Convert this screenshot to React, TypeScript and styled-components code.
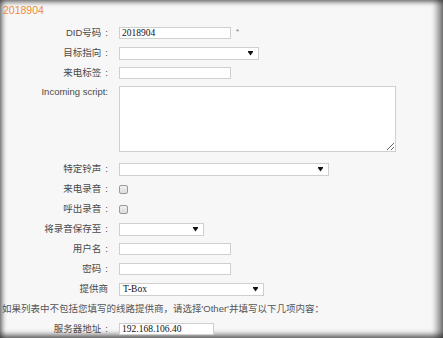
import React from 'react'
import styled, { createGlobalStyle } from 'styled-components'

const GlobalStyle = createGlobalStyle`
    html, body {
        margin: 0;
        padding: 0;
        background: #f7f7f7;
    }
    body {
        font-family: 'Liberation Sans', 'Noto Sans CJK SC', sans-serif;
    }
`

const Arrow = () => (
    <svg width="5" height="5" viewBox="0 0 5 5">
        <rect x="0" y="0" width="5" height="1" fill="#111" />
        <polygon points="0,1 5,1 2.5,4.5" fill="#111" />
    </svg>
)

type Row =
    | { kind: 'input'; label: string; width: number; value?: string; required?: boolean }
    | { kind: 'select'; label: string; width: number; value?: string }
    | { kind: 'check'; label: string }

const topRows: Row[] = [
    { kind: 'input', label: 'DID号码', width: 112, value: '2018904', required: true },
    { kind: 'select', label: '目标指向', width: 140 },
    { kind: 'input', label: '来电标签', width: 112 },
]

const bottomRows: Row[] = [
    { kind: 'select', label: '特定铃声', width: 210 },
    { kind: 'check', label: '来电录音' },
    { kind: 'check', label: '呼出录音' },
    { kind: 'select', label: '将录音保存至', width: 85 },
    { kind: 'input', label: '用户名', width: 112 },
    { kind: 'input', label: '密码', width: 112 },
]

const renderControl = (row: Row) => {
    if (row.kind === 'check') return <CheckBox />
    if (row.kind === 'select')
        return (
            <SelectBox $width={row.width}>
                <span>{row.value}</span>
                <Arrow />
            </SelectBox>
        )
    return (
        <>
            <TextInput $width={row.width} defaultValue={row.value} readOnly />
            {row.required && <Star>*</Star>}
        </>
    )
}

const renderRows = (rows: Row[]) =>
    rows.map((row) => (
        <FormRow key={row.label}>
            <Label>
                {row.label}
                <Colon>:</Colon>
            </Label>
            <Control>{renderControl(row)}</Control>
        </FormRow>
    ))

const App = () => {
    return (
        <Frame>
            <GlobalStyle />
            <Title>2018904</Title>
            {renderRows(topRows)}
            <ScriptRow>
                <Label>Incoming script:</Label>
                <Control>
                    <ScriptArea />
                </Control>
            </ScriptRow>
            {renderRows(bottomRows)}
            <FormRow>
                <Label>提供商</Label>
                <Control>
                    <SelectBox $width={145}>
                        <Value>T-Box</Value>
                        <Arrow />
                    </SelectBox>
                </Control>
            </FormRow>
            <Note>如果列表中不包括您填写的线路提供商，请选择'Other'并填写以下几项内容：</Note>
            <FormRow>
                <Label>
                    服务器地址
                    <Colon>:</Colon>
                </Label>
                <Control>
                    <TextInput $width={95} defaultValue="192.168.106.40" readOnly />
                </Control>
            </FormRow>
        </Frame>
    )
}

export default App

const Frame = styled.div`
    position: relative;
    width: 443px;
    height: 338px;
    overflow: hidden;
    background: #f7f7f7;
    box-shadow:
        inset 4px 0 4px -1px rgba(0, 0, 0, 0.4),
        inset 0 4px 4px -1px rgba(0, 0, 0, 0.35),
        inset -8px 0 6px -2px rgba(0, 0, 0, 0.45),
        inset 0 -6px 5px -2px rgba(0, 0, 0, 0.45);
    font-size: 9.5px;
    color: #4a4a4a;
`

const Title = styled.div`
    height: 23px;
    line-height: 20px;
    padding-left: 3px;
    font-size: 10.5px;
    color: #f08a3c;
`

const FormRow = styled.div`
    display: grid;
    grid-template-columns: 108px 1fr;
    column-gap: 11px;
    align-items: center;
    height: 20px;
`

const ScriptRow = styled(FormRow)`
    align-items: start;
    height: auto;
    padding: 3px 0 7px;
`

const Label = styled.div`
    text-align: right;
    line-height: 12px;
    white-space: nowrap;
`

const Colon = styled.span`
    margin-left: 4px;
`

const Control = styled.div`
    display: flex;
    align-items: center;
    height: 100%;
`

const TextInput = styled.input<{ $width: number }>`
    box-sizing: border-box;
    width: ${(p) => p.$width}px;
    height: 12px;
    margin: 0;
    padding: 0 2px;
    border: 1px solid #cfcfcf;
    background: #fff;
    font-family: 'Liberation Serif', serif;
    font-size: 9.5px;
    color: #111;
    outline: none;
`

const Star = styled.span`
    margin-left: 5px;
    margin-top: -4px;
    font-size: 8px;
    color: #6a7a8a;
`

const SelectBox = styled.div<{ $width: number }>`
    box-sizing: border-box;
    width: ${(p) => p.$width}px;
    height: 13px;
    display: flex;
    align-items: center;
    justify-content: space-between;
    padding: 0 5px 0 3px;
    border: 1px solid #cfcfcf;
    background: #fff;
`

const Value = styled.span`
    font-family: 'Liberation Serif', serif;
    font-size: 9.5px;
    color: #111;
`

const CheckBox = styled.span`
    box-sizing: border-box;
    width: 9px;
    height: 9px;
    border: 1px solid #9a9a9a;
    border-radius: 2px;
    background: linear-gradient(#f0f0f0, #dcdcdc);
`

const ScriptArea = styled.textarea`
    box-sizing: border-box;
    width: 277px;
    height: 66px;
    margin: 0;
    border: 1px solid #cfcfcf;
    background: #fff;
    resize: both;
    outline: none;
`

const Note = styled.div`
    height: 20px;
    line-height: 20px;
    padding-left: 2px;
    color: #555;
    white-space: nowrap;
`
